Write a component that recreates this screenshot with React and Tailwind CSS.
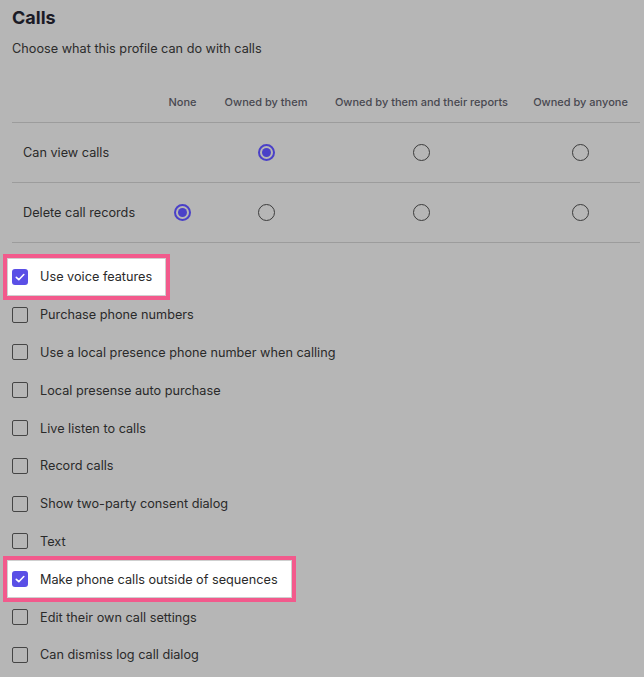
import React from "react";

const cols = ["None", "Owned by them", "Owned by them and their reports", "Owned by anyone"];
const rows = [
  { label: "Can view calls", sel: 1 },
  { label: "Delete call records", sel: 0 },
];
const items = [
  { label: "Use voice features", checked: true },
  { label: "Purchase phone numbers" },
  { label: "Use a local presence phone number when calling" },
  { label: "Local presense auto purchase" },
  { label: "Live listen to calls" },
  { label: "Record calls" },
  { label: "Show two-party consent dialog" },
  { label: "Text" },
  { label: "Make phone calls outside of sequences", checked: true },
  { label: "Edit their own call settings" },
  { label: "Can dismiss log call dialog" },
];

function Radio({ on }) {
  if (on)
    return (
      <span className="flex h-[17px] w-[17px] items-center justify-center rounded-full border-2 border-[#4a40c8]">
        <span className="h-[9px] w-[9px] rounded-full bg-[#4a40c8]" />
      </span>
    );
  return <span className="block h-[17px] w-[17px] rounded-full border-[1.5px] border-[#3c3c3c]" />;
}

function Checkbox({ on }) {
  if (on)
    return (
      <span className="flex h-[16px] w-[16px] items-center justify-center rounded-[3px] bg-[#5a4fe6]">
        <svg width="12" height="12" viewBox="0 0 12 12" fill="none">
          <path d="M2.3 6.3 L4.8 8.7 L9.8 3.5" stroke="white" strokeWidth="1.6" strokeLinecap="round" strokeLinejoin="round" />
        </svg>
      </span>
    );
  return <span className="block h-[16px] w-[16px] rounded-[2px] border-[1.5px] border-[#454545]" />;
}

export default function App() {
  return (
    <div
      className="min-h-[677px] w-[644px] overflow-hidden bg-[#b6b6b6] pl-[12px] pr-[4px] text-[#2a2a2a]"
      style={{ fontFamily: "Inter, 'Noto Sans', sans-serif" }}
    >
      <h1 className="pt-[6px] text-[18px] font-bold leading-[24px] text-[#1b1b26]">Calls</h1>
      <p className="mt-[10px] text-[12.7px] leading-[18px] text-[#2c2c2c]">Choose what this profile can do with calls</p>

      <div className="mt-[25px] grid grid-cols-[143px_55px_112px_199px_119px]">
        <div className="h-[40px] border-b border-[#9c9c9c]" />
        {cols.map((c) => (
          <div key={c} className="flex h-[40px] items-center justify-center border-b border-[#9c9c9c] text-[11px] font-medium text-[#484850] whitespace-nowrap">
            {c}
          </div>
        ))}
        {rows.map((r) => (
          <React.Fragment key={r.label}>
            <div className="flex h-[60px] items-center border-b border-[#9c9c9c] pl-[11px] text-[12.7px] text-[#2a2a2a]">{r.label}</div>
            {cols.map((c, i) => (
              <div key={c} className="flex h-[60px] items-center justify-center border-b border-[#9c9c9c]">
                {r.label === "Can view calls" && i === 0 ? null : <Radio on={r.sel === i} />}
              </div>
            ))}
          </React.Fragment>
        ))}
      </div>

      <div className="mt-[15px] flex flex-col items-start">
        {items.map((it) => (
          <div
            key={it.label}
            className={
              it.checked
                ? "-ml-[5px] flex h-[37.8px] items-center gap-[12px] bg-white pl-[5px] pr-[14px] outline-4 outline-[#f25a8c] shadow-[inset_0_0_0_1px_#cfcfcf]"
                : "flex h-[37.8px] items-center gap-[12px]"
            }
          >
            <Checkbox on={it.checked} />
            <span className="text-[12.7px] text-[#2a2a2a]">{it.label}</span>
          </div>
        ))}
      </div>
    </div>
  );
}
